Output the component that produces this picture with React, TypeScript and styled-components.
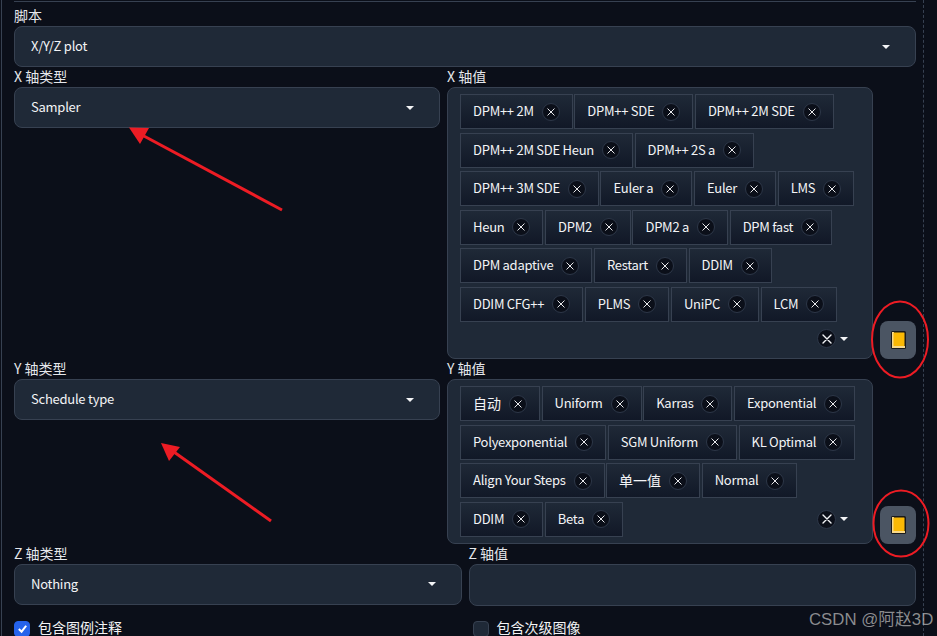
import React from "react";
import styled, { createGlobalStyle } from "styled-components";

const Global = createGlobalStyle`
  html, body { margin: 0; padding: 0; height: 636px; overflow: hidden; background: #0b0f19; }
  body { font-family: "Noto Sans CJK SC", "Noto Sans", sans-serif; font-size: 14px; color: #f3f4f6; }
`;

const Shell = styled.div`
  position: relative;
  box-sizing: border-box;
  width: 923px;
  height: 636px;
  margin-left: 1px;
  padding: 0 7px 0 12px;
  border-left: 1px solid #374151;
  border-right: 1px dashed #374151;
`;
const TopEdge = styled.div`
  height: 2px;
  margin-bottom: 4px;
  border-bottom: 1px solid #374151;
  box-sizing: border-box;
`;
const Label = styled.div`
  height: 20px;
  line-height: 18px;
  font-size: 14px;
  color: #e5e7eb;
  white-space: nowrap;
`;
const Select = styled.div`
  box-sizing: border-box;
  height: 41px;
  display: flex;
  align-items: center;
  justify-content: space-between;
  padding: 0 25px 0 16px;
  background: #1f2937;
  border: 1px solid #374151;
  border-radius: 8px;
  color: #f3f4f6;
  font-size: 13px;
  letter-spacing: -0.25px;
`;
const Value = styled.span<{ $lift?: number }>`
  margin-bottom: ${(p) => p.$lift ?? 2}px;
`;
const Caret = styled.span`
  width: 0;
  height: 0;
  border-left: 4px solid transparent;
  border-right: 4px solid transparent;
  border-top: 4px solid #f3f4f6;
  flex: none;
`;
const AxisRow = styled.div`
  display: flex;
  gap: 7px;
  align-items: flex-end;
`;
const Column = styled.div`
  flex: 1 1 0;
  min-width: 0;
  align-self: flex-start;
`;
const MultiBox = styled.div`
  box-sizing: border-box;
  display: flex;
  flex-wrap: wrap;
  align-items: center;
  gap: 3.5px 1.6px;
  padding: 6px 12px;
  background: #1f2937;
  border: 1px solid #374151;
  border-radius: 8px;
`;
const Chip = styled.div<{ $cjk: boolean }>`
  box-sizing: border-box;
  height: 35px;
  display: flex;
  align-items: center;
  gap: 8px;
  padding: 0 12px;
  background: linear-gradient(to top, #111827, #1f2937);
  border: 1px solid #374151;
  white-space: nowrap;
  color: #f3f4f6;
  font-size: ${(p) => (p.$cjk ? 14 : 13)}px;
  letter-spacing: ${(p) => (p.$cjk ? 0 : -0.27)}px;
`;
const Circle = styled.span<{ $size: number }>`
  box-sizing: border-box;
  width: ${(p) => p.$size}px;
  height: ${(p) => p.$size}px;
  flex: none;
  display: flex;
  align-items: center;
  justify-content: center;
  background: #0b0f19;
  border: 1px solid #2d3748;
  border-radius: 50%;
`;
const Controls = styled.div`
  margin-left: auto;
  height: 27px;
  display: flex;
  align-items: center;
  gap: 4px;
  padding-right: 12px;
`;
const BookButton = styled.button`
  width: 36px;
  height: 38px;
  flex: none;
  margin: 0;
  padding: 0;
  border: none;
  border-radius: 8px;
  background: #4b5563;
  display: flex;
  align-items: center;
  justify-content: center;
`;
const ZGrid = styled.div`
  display: grid;
  grid-template-columns: 1fr 1fr;
  column-gap: 7px;
`;
const EmptyInput = styled.div`
  box-sizing: border-box;
  height: 42px;
  background: #1f2937;
  border: 1px solid #374151;
  border-radius: 8px;
`;
const CheckRow = styled.div`
  display: grid;
  grid-template-columns: 1fr 1fr;
  column-gap: 7px;
  margin-top: 15px;
`;
const CheckItem = styled.label<{ $inset?: boolean }>`
  display: flex;
  align-items: center;
  gap: 8px;
  height: 16px;
  padding-left: ${(p) => (p.$inset ? 4 : 0)}px;
  color: #f3f4f6;
  white-space: nowrap;
`;
const Box = styled.span<{ $checked?: boolean }>`
  box-sizing: border-box;
  width: 16px;
  height: 16px;
  flex: none;
  display: flex;
  align-items: center;
  justify-content: center;
  border-radius: 4px;
  background: ${(p) => (p.$checked ? "#2563eb" : "#1f2937")};
  border: 1px solid ${(p) => (p.$checked ? "#2563eb" : "#374151")};
`;
const Overlay = styled.svg`
  position: absolute;
  left: -2px;
  top: 0;
  pointer-events: none;
`;
const Watermark = styled.div`
  position: absolute;
  left: 807px;
  top: 609px;
  font-family: "Liberation Sans", "Noto Sans CJK SC", sans-serif;
  font-size: 16.8px;
  line-height: 22px;
  color: rgba(190, 190, 190, 0.72);
  white-space: nowrap;
`;

const Cross = ({ size, width = 1.2 }: { size: number; width?: number }) => (
  <svg width={size} height={size} viewBox="0 0 10 10">
    <path d="M1 1 L9 9 M9 1 L1 9" stroke="#f3f4f6" strokeWidth={width} strokeLinecap="round" />
  </svg>
);

const Book = () => (
  <svg width="15" height="18" viewBox="0 0 15 18">
    <rect x="0" y="0" width="15" height="18" rx="1.5" fill="#1a1a1a" />
    <rect x="1" y="1" width="2" height="14.5" fill="#f8d98a" />
    <rect x="2.5" y="1.5" width="11" height="13.5" rx="0.5" fill="#fbb905" />
    <rect x="1" y="15" width="13" height="2" fill="#f8d98a" />
  </svg>
);

const Tag = ({ text }: { text: string }) => (
  <Chip $cjk={/[^\x00-\x7f]/.test(text)}>
    <Value>{text}</Value>
    <Circle $size={18}>
      <Cross size={8} />
    </Circle>
  </Chip>
);

const ClearControls = () => (
  <Controls>
    <Circle $size={19}>
      <Cross size={10} width={1.4} />
    </Circle>
    <Caret />
  </Controls>
);

const xValues = [
  "DPM++ 2M", "DPM++ SDE", "DPM++ 2M SDE", "DPM++ 2M SDE Heun", "DPM++ 2S a",
  "DPM++ 3M SDE", "Euler a", "Euler", "LMS", "Heun", "DPM2", "DPM2 a", "DPM fast",
  "DPM adaptive", "Restart", "DDIM", "DDIM CFG++", "PLMS", "UniPC", "LCM",
];
const yValues = [
  "自动", "Uniform", "Karras", "Exponential", "Polyexponential", "SGM Uniform",
  "KL Optimal", "Align Your Steps", "单一值", "Normal", "DDIM", "Beta",
];

const Axis = ({ name, type, values }: { name: string; type: string; values: string[] }) => (
  <AxisRow>
    <Column>
      <Label>{name} 轴类型</Label>
      <Select>
        <Value>{type}</Value>
        <Caret />
      </Select>
    </Column>
    <Column>
      <Label>{name} 轴值</Label>
      <MultiBox>
        {values.map((v) => (
          <Tag key={v} text={v} />
        ))}
        <ClearControls />
      </MultiBox>
    </Column>
    <BookButton>
      <Book />
    </BookButton>
  </AxisRow>
);

export default function App() {
  return (
    <Shell>
      <Global />
      <TopEdge />
      <Label>脚本</Label>
      <Select>
        <Value>X/Y/Z plot</Value>
        <Caret />
      </Select>
      <Axis name="X" type="Sampler" values={xValues} />
      <Axis name="Y" type="Schedule type" values={yValues} />
      <ZGrid>
        <div>
          <Label>Z 轴类型</Label>
          <Select>
            <Value>Nothing</Value>
            <Caret />
          </Select>
        </div>
        <div>
          <Label>Z 轴值</Label>
          <EmptyInput />
        </div>
      </ZGrid>
      <CheckRow>
        <CheckItem>
          <Box $checked>
            <svg width="11" height="11" viewBox="0 0 12 12">
              <path d="M2 6.5 L5 9.5 L10 3" fill="none" stroke="#fff" strokeWidth="2.2" />
            </svg>
          </Box>
          <Value $lift={4}>包含图例注释</Value>
        </CheckItem>
        <CheckItem $inset>
          <Box />
          <Value $lift={4}>包含次级图像</Value>
        </CheckItem>
      </CheckRow>
      <Overlay width="937" height="636" viewBox="0 0 937 636">
        <g stroke="#ed1c24" strokeWidth="3" fill="none">
          <line x1="282" y1="210" x2="142" y2="135" />
          <line x1="271" y1="521" x2="174" y2="452" />
          <ellipse cx="900" cy="339.5" rx="28" ry="38" strokeWidth="2" />
          <ellipse cx="901" cy="523.5" rx="27.5" ry="33" strokeWidth="2" />
        </g>
        <polygon points="129,127.5 149,128 140,144" fill="#ed1c24" />
        <polygon points="161,443 180,447 169,461" fill="#ed1c24" />
      </Overlay>
      <Watermark>CSDN @阿赵3D</Watermark>
    </Shell>
  );
}
